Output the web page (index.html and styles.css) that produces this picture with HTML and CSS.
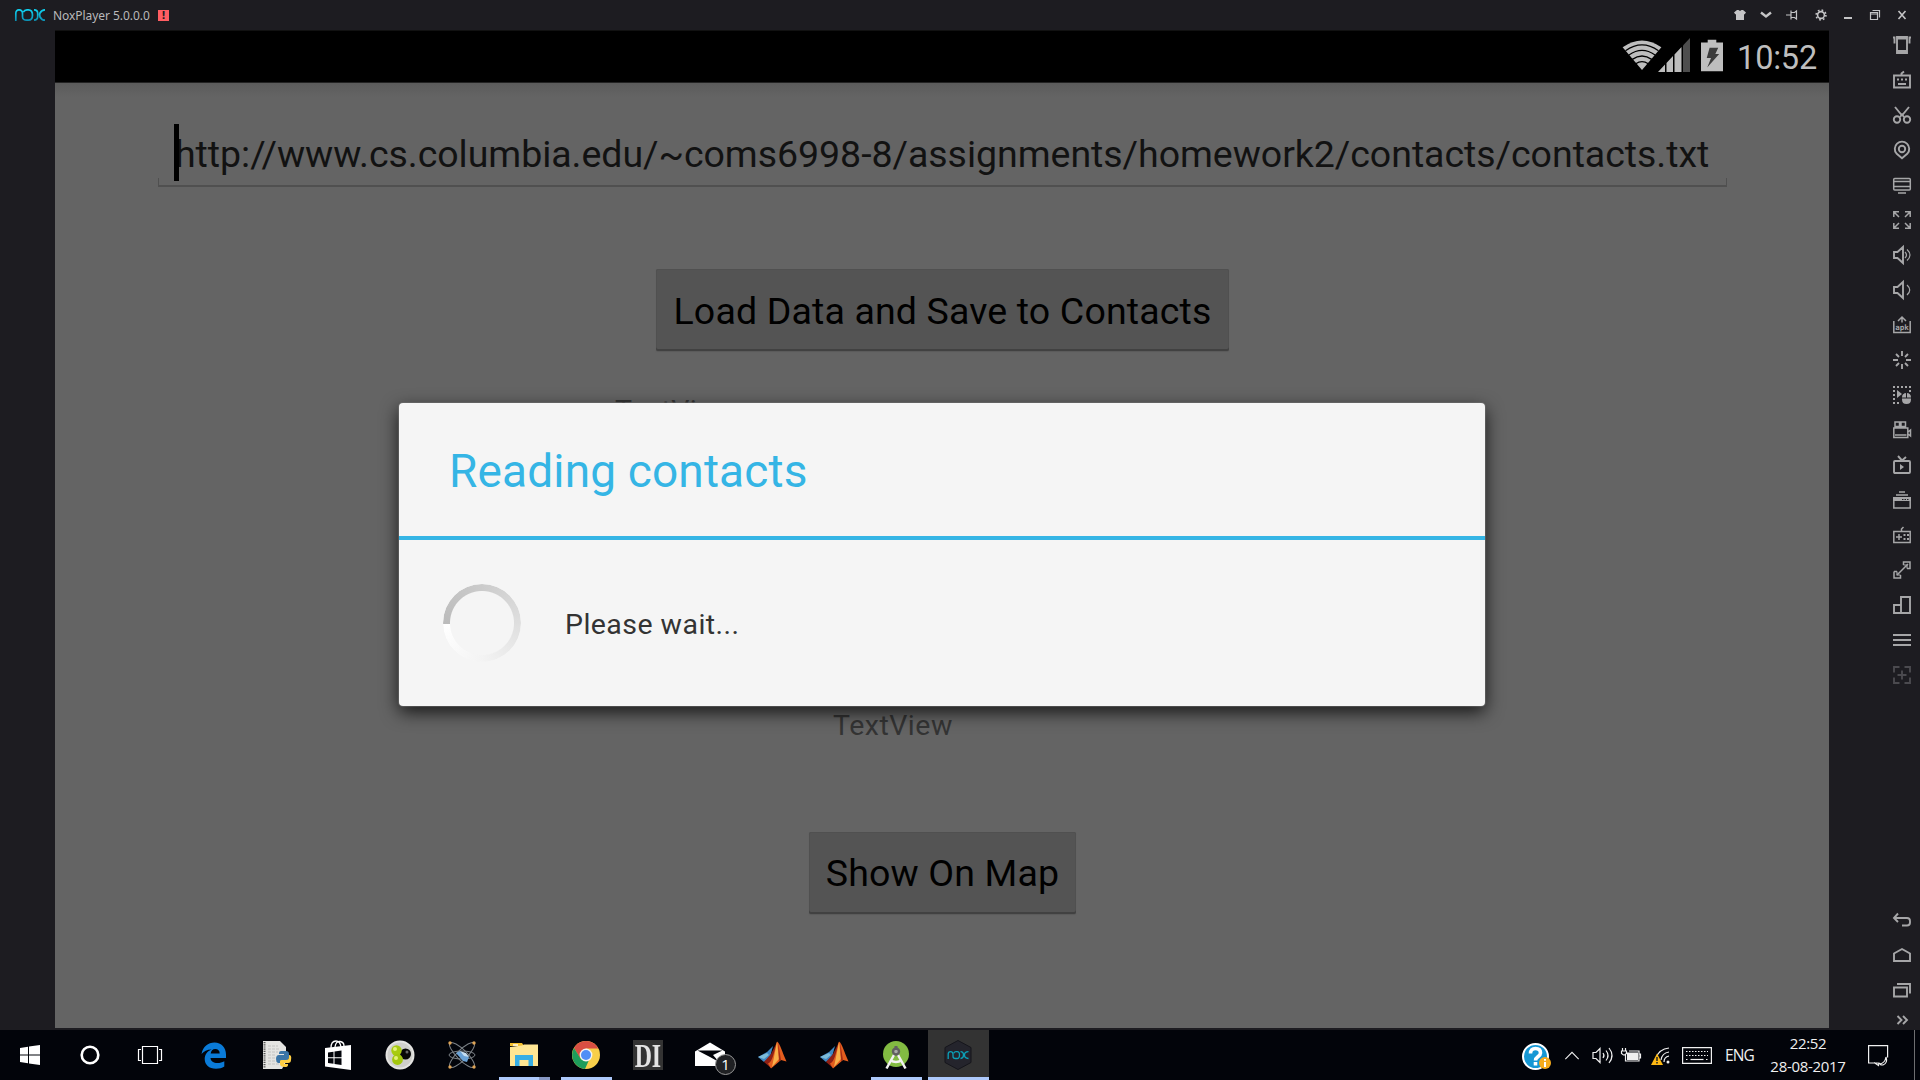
FILE: index.html
```html
<!DOCTYPE html>
<html lang="en">
<head>
<meta charset="utf-8">
<title>NoxPlayer 5.0.0.0</title>
<link rel="stylesheet" href="styles.css">
</head>
<body>
<div class="desktop">
  <header class="titlebar">
    <svg class="logo" viewBox="0 0 30 12" fill="none" stroke-width="1.7">
      <defs><linearGradient id="cyan" x1="0" y1="0" x2="0" y2="12" gradientUnits="userSpaceOnUse"><stop offset="0" stop-color="#0fd6f5"/><stop offset="1" stop-color="#0c8db0"/></linearGradient></defs>
      <path stroke="url(#cyan)" d="M.8 12V4.500C.8 2 2 .8 4 .8s3.500 1.200 3.500 3.700v3.200c0 2.400 1.800 3.500 4.200 3.500h1.800c2.600 0 4-1.800 4-5.200S16 .8 13.500.8h-1.500C10 .8 9 1.800 8.300 3.200M19 .8c2.500 0 3.700 1.200 3.700 3.600V7.600c0 2.400-1.200 3.600-3.700 3.600M30 .8c-2.600 0-4 1.200-5 3.200s0 2.500 0 4c1 2 2.400 3.200 5 3.200"/>
    </svg>
    <span class="app-title">NoxPlayer 5.0.0.0</span>
    <span class="alert">!</span>
    <div class="window-tools">
      <svg viewBox="0 0 12 12" fill="#c4c4c6"><path d="M3 1h1.500l1.500 1 1.500-1H9l3 2.500-1.500 2L10 5v6H2V5l-.5.5L0 3.500z"/></svg>
      <svg viewBox="0 0 12 12" fill="none" stroke="#c4c4c6" stroke-width="2.400"><path d="M1 3.500l5 4 5-4"/></svg>
      <svg viewBox="0 0 12 12" fill="none" stroke="#c4c4c6" stroke-width="1.200"><path d="M0 6h4.500M5 1.500v9M5 3.500h3.500l2-1.500v8l-2-1.500H5"/></svg>
      <svg viewBox="0 0 12 12" fill="none" stroke="#c4c4c6"><circle cx="6" cy="6" r="3.400" stroke-width="1.600"/><circle cx="6" cy="6" r="4.900" stroke-width="1.600" stroke-dasharray="1.700 2.148"/></svg>
      <svg viewBox="0 0 12 12" fill="#c4c4c6"><path d="M2 8h8v2H2z"/></svg>
      <svg viewBox="0 0 12 12" fill="none" stroke="#c4c4c6" stroke-width="1.200"><path d="M1.500 3.500h7v7h-7zM1.500 5h7M3.500 1.500h7v7"/></svg>
      <svg viewBox="0 0 12 12" fill="none" stroke="#c4c4c6" stroke-width="1.600"><path d="M2.500 2l7 8M9.500 2l-7 8"/></svg>
    </div>
  </header>

  <div class="player">
    <main class="screen">
      <div class="statusbar">
        <svg class="wifi" viewBox="0 0 40 32"><path fill="#bebebe" d="M0 7.500Q20-6.500 40 7.500L20 31z"/><path fill="none" stroke="#000" stroke-width="1.300" d="M3 11Q20-1 37 11M6.500 15.500Q20 6 33.500 15.500M10 20q10-7 20 0M13.500 24.500q6.500-4.500 13 0"/></svg>
        <svg class="signal" viewBox="0 0 32 34"><path fill="#bebebe" d="M0 34l7-7.400V34zM8.500 25l6.500-7v16H8.500zM16.500 16.500l7-7.500v25h-7z"/><path fill="#4d4d4d" d="M25 7.500L32 0v34h-7z"/></svg>
        <svg class="battery" viewBox="0 0 23 33"><path fill="#bebebe" d="M7 0h9v3h7v30H0V3h7z"/><path fill="#3c3c3c" d="M9 8.500h9L15 15h4L6.500 29l4-10H6z"/></svg>
        <span class="clock">10:52</span>
      </div>
      <div class="app">
        <div class="url-field"><span class="caret"></span><span class="url">http://www.cs.columbia.edu/~coms6998-8/assignments/homework2/contacts/contacts.txt</span></div>
        <div class="button load">Load Data and Save to Contacts</div>
        <div class="label first">TextView</div>
        <div class="label second">TextView</div>
        <div class="button map">Show On Map</div>
      </div>
      <section class="dialog">
        <h1>Reading contacts</h1>
        <div class="dialog-body"><span class="spinner"></span><p>Please wait...</p></div>
      </section>
    </main>

    <aside class="sidebar">
      <svg viewBox="0 0 18 18"><path d="M4 1h10v16H4zM4 2.500h10M4 15h10M0 1.500h1.500v6M18 1.500h-1.500v6"/><path class="fill" d="M7 14.500h4V17H7z"/></svg>
      <svg viewBox="0 0 18 18"><path d="M1 4.500h16v12H1zM8.500 4V2.500L11 .5M5 13h8"/><path class="fill" d="M4 7.500h2v2H4zM8 7.500h2v2H8zM12 7.500h2v2h-2z"/></svg>
      <svg viewBox="0 0 18 18"><path d="M2 1l7 8.500M16 1L9 9.500M7 11l2-2.500 2 2.500"/><circle cx="4" cy="13.500" r="3.200"/><circle cx="14" cy="13.500" r="3.200"/></svg>
      <svg viewBox="0 0 18 18"><path d="M9 17.200L3.500 12.500a7.200 7.200 0 1 1 11 0z"/><circle cx="9" cy="8" r="3.200"/></svg>
      <svg viewBox="0 0 18 18"><path class="slim" d="M1.700 2.500h14.600q1 0 1 1v9.500q0 1-1 1H1.700q-1 0-1-1V3.500q0-1 1-1zM1 5.500h16M1 10.500h16M5 17h8"/></svg>
      <svg viewBox="0 0 18 18"><path class="slim" d="M.8 6V.8H6M1 1l5 5M12 .8h5.200V6M17 1l-5 5M.8 12v5.200H6M1 17l5-5M12 17.200h5.200V12M17 17l-5-5"/></svg>
      <svg viewBox="0 0 18 18"><path d="M1 6h3.500L10 1v16L4.500 12H1z"/><path class="thin" d="M12 6q3 3 0 6M14 3.500q6 5.500 0 11"/></svg>
      <svg viewBox="0 0 18 18"><path d="M1 6h3.500L10 1v16L4.500 12H1z"/><path class="thin" d="M14 4q5.500 5 0 10"/></svg>
      <svg viewBox="0 0 18 18"><path class="slim" d="M.8 5v11.500h16.400V5M9 6.500V1M5 5l4-4 4 4"/><text x="9" y="14">apk</text></svg>
      <svg viewBox="0 0 18 18"><path d="M9 0v5M9 13v5M0 9h5M13 9h5M3 3l3 3M12 12l3 3M15 3l-3 3M6 12l-3 3"/></svg>
      <svg viewBox="0 0 18 18"><path class="dots" d="M0 1h18M1 4v14M0 17h7M17 4v3"/><path class="fill" d="M4 4l5 4-5 4zM9 11.500q0-4.500 4.500-4.500t4.500 4.500v2q0 4.500-4.500 4.500T9 13.500z"/><path class="cut" d="M9 12h9M13.500 7v5"/></svg>
      <svg viewBox="0 0 18 18"><path class="slim" d="M.8 7h14v9.500H.8zM15 11l2.500-2v6L15 13M2 14h11.500M2 1h4.500v4.500H2zM8 1h4.500v4.500H8z"/></svg>
      <svg viewBox="0 0 18 18"><path d="M2 5h14q1 0 1 1v10q0 1-1 1H2q-1 0-1-1V6q0-1 1-1zM5 0l4 4.500M13 1L9 4.500"/><path class="fill" d="M7 8l4 3-4 3z"/></svg>
      <svg viewBox="0 0 18 18"><path class="slim" d="M.8 7h16.400v10H.8zM6 1h6M3 4h12"/><path class="fill" d="M0 6h18v4H0z"/><path class="cut" d="M9 8.500h7.500" stroke-dasharray="1.500 1"/></svg>
      <svg viewBox="0 0 18 18"><path class="slim" d="M.8 5.500h16.400v11H.8zM8.500 5V3L10.500 1M3 11h6M6 8v6"/><path class="fill" d="M10.500 8h2v2h-2zM14 8h2v2h-2zM10.500 12h2v2h-2zM14 12h2v2h-2z"/></svg>
      <svg viewBox="0 0 18 18"><path class="slim" d="M10.500 4V1H17v6.500h-3M1 10.500h3M7.500 14v3H1v-6.500M4 14L15 3"/><path class="thin" d="M4 10.500v3.500h3.500M10.500 4H14v3.500"/></svg>
      <svg viewBox="0 0 18 18"><path d="M1 9h7v8H1zM8 1h9v16H8z"/></svg>
      <svg viewBox="0 0 18 18"><path d="M0 4h18M0 9h18M0 14h18"/></svg>
      <svg class="dim" viewBox="0 0 18 18"><path d="M6.500 1H1v5.500M11.500 1H17v5.500M6.500 17H1v-5.500M11.500 17H17v-5.500M9 4.500v9M4.500 9h9"/></svg>
      <div class="nav-keys">
        <svg viewBox="0 0 18 18"><path d="M1 7h13q3 0 3 3v1.500q0 3-3 3H9M5 2.500L1 7l4 4"/></svg>
        <svg viewBox="0 0 18 18"><path d="M1 15V7.500L9 3l8 4.500V15z"/></svg>
        <svg viewBox="0 0 18 18"><path d="M1 6.500h13v9H1zM4 3h13v9.500"/></svg>
        <svg class="more" viewBox="0 0 18 18"><path d="M4.500 5l4 4-4 4M10 5l4 4-4 4"/></svg>
      </div>
    </aside>
  </div>

  <footer class="taskbar">
    <div class="system">
      <svg viewBox="0 0 30 30" fill="#fff"><path d="M5 8l8-1.200v7.700H5zM14 6.600L25 5v9.500H14zM5 15.500h8v7.700L5 22zM14 15.500h11V25l-11-1.600z"/></svg>
      <svg viewBox="0 0 30 30"><circle cx="15" cy="15" r="8.300" fill="none" stroke="#fff" stroke-width="2.600"/></svg>
      <svg viewBox="0 0 30 30" fill="none" stroke="#fff" stroke-width="1.200"><path d="M7.500 6.500h15v17h-15zM6 9.500H3.500v11H6M24 9.500h2.500v11H24"/></svg>
    </div>
    <div class="apps">
      <div class="task"><svg viewBox="0 0 30 30"><path fill="#0a7bd8" d="M2.500 14C4 6.500 9 2.500 15.500 2.500 22.500 2.500 27 7.500 27 14.500V18H11.500c.3 3.500 3 5 7 5 2.500 0 4.700-.6 6.800-1.800v5.300C23 28 20.500 28.700 17 28.700c-7 0-11.300-4-11.300-9.700 0-4.500 2.500-8 7-9.600C8 9.500 4.800 11 2.500 14zm9.200-.5h9C20.700 10.500 19 9 16.300 9s-4.300 1.800-4.600 4.500z"/></svg></div>
      <div class="task"><svg viewBox="0 0 30 30"><path fill="#e4e4e2" d="M2 1h17l6 6v15L21 29H2z"/><path stroke="#c2c2c1" stroke-dasharray="3 1" d="M7 6h10M7 9h12M7 12h10M7 15h8M7 18h8M7 21h9M7 24h11"/><path stroke="#555" stroke-width="2" stroke-dasharray="1.200 1" d="M3.500 2v26"/><path fill="#3a75a8" d="M20 11h5q3 0 3 3v4q0 2-2 2h-5l-2 3h-2q-2-1-2-4 0-4 3-4h5v-1h-5v-1q0-2 2-2z"/><path fill="#ffce42" d="M28 15q3 0 2 5 0 3-3 3h-4v1h4v1q0 2-3 2-5 0-5-3v-3q0-1 2-1h4q3 0 3-3z"/></svg></div>
      <div class="task"><svg viewBox="0 0 30 30"><path fill="none" stroke="#fff" stroke-width="1.300" d="M8 8q0-7 5-7 4 0 5 6M12 7q1-6 5-5.500Q21 2 21 6"/><path fill="#fff" d="M2 8l26-3v25L2 26.500z"/><path fill="#02040a" d="M5 12.500l5.500-.8v5.600H5zM11.500 11.500l7-1v6.800h-7zM5 18.300h5.500v5.500L5 23zM11.500 18.300h7V25l-7-1z"/></svg></div>
      <div class="task"><svg viewBox="0 0 30 30"><circle cx="15" cy="15" r="14.500" fill="#e4e4e2"/><circle cx="15" cy="15" r="12.500" fill="#cfcfcc"/><circle cx="20.500" cy="14" r="5.500" fill="#080808"/><circle cx="11.500" cy="10.500" r="5.200" fill="#a8cb10"/><circle cx="12.500" cy="19.500" r="5.400" fill="#a3c60d"/><circle cx="10" cy="9" r="2" fill="#e2f276"/><circle cx="11" cy="18" r="2" fill="#e2f276"/><circle cx="22" cy="12" r="1.500" fill="#666"/></svg></div>
      <div class="task"><svg viewBox="0 0 30 30" fill="none" stroke="#7d8388"><ellipse cx="15" cy="15" rx="17" ry="5" transform="rotate(45 15 15)"/><ellipse cx="15" cy="15" rx="17" ry="5" transform="rotate(-45 15 15)"/><ellipse cx="15" cy="15" rx="13" ry="4"/><path stroke="none" fill="#6aa2d6" d="M9 13l4-2 9 6-2 5-4-1z"/><path stroke="none" fill="#c5def2" d="M13 11l6 2 3 4-5-1z"/><g stroke="none" fill="#dfa455"><circle cx="3" cy="3" r="1.700"/><circle cx="27" cy="3" r="1.700"/><circle cx="3" cy="27" r="1.700"/><circle cx="27" cy="27" r="1.700"/></g></svg></div>
      <div class="task multi"><svg viewBox="0 0 30 30"><path fill="#f5c02d" d="M1 3h12l2 3H1z"/><path fill="#fff" d="M4 4.300h5v1.400H4z"/><path fill="#ffe693" d="M1 7l12-1.500L15 4.500h14V26H1z"/><path fill="#37aee5" d="M6 15h18v11h-4.500v-6h-9v6H6z"/></svg></div>
      <div class="task running"><svg viewBox="0 0 30 30"><circle cx="15" cy="15" r="14" fill="#f8cf4a"/><path fill="#d84f43" d="M15 1a14 14 0 0 1 12.400 7.500H15L9 18 3 8A14 14 0 0 1 15 1z"/><path fill="#1d9d5b" d="M3 8l6.500 10.500L18 20l-4 9A14 14 0 0 1 3 8z"/><circle cx="15" cy="15" r="6.400" fill="#f4f4f4"/><circle cx="15" cy="15" r="5" fill="#4f8ef6"/></svg></div>
      <div class="task"><div class="di"><span>DI</span></div></div>
      <div class="task"><svg viewBox="0 0 30 30"><path fill="#fff" d="M0 11.500L15 2.500l15 9V26H0z"/><path fill="#02040a" d="M2.500 10.500H27.500L18 15l6 7-9-5z"/></svg><span class="badge">1</span></div>
      <div class="task"><svg viewBox="0 0 30 30"><path fill="#3f87c4" d="M1 17l9-5 6-6-3 11-6 5z"/><path fill="#7dbbd8" d="M1 17l9-4 2 2-5 4z"/><path fill="#8e2015" d="M7 22l7-8 6-12 1 16-7 10z"/><path fill="#e35d1e" d="M20 1.500c3 2 5 10 9.500 20L24 20 14 28.500l-3-5c5-2 6-12 9-22z"/><path fill="#f9b04a" d="M20 2l2 17-7 8 2-10z"/><path fill="#a52a17" d="M21 2l3 18-2 1z"/></svg></div>
      <div class="task"><svg viewBox="0 0 30 30"><path fill="#3f87c4" d="M1 17l9-5 6-6-3 11-6 5z"/><path fill="#7dbbd8" d="M1 17l9-4 2 2-5 4z"/><path fill="#8e2015" d="M7 22l7-8 6-12 1 16-7 10z"/><path fill="#e35d1e" d="M20 1.500c3 2 5 10 9.500 20L24 20 14 28.500l-3-5c5-2 6-12 9-22z"/><path fill="#f9b04a" d="M20 2l2 17-7 8 2-10z"/><path fill="#a52a17" d="M21 2l3 18-2 1z"/></svg></div>
      <div class="task running"><svg viewBox="0 0 30 30"><circle cx="15" cy="14" r="13" fill="#82bb42"/><path fill="none" stroke="#f2f2f2" stroke-width="2.500" d="M13.500 14L5.500 28.500M16.500 14l8 14.500M9 20q6 4 12 0"/><circle cx="15" cy="11.500" r="3" fill="#aaa" stroke="#606060" stroke-width="2.400"/><path stroke="#606060" stroke-width="3" d="M15 6v4"/></svg></div>
      <div class="task running active"><svg viewBox="0 0 30 30"><path fill="#24242c" stroke="#15151b" d="M15 .5l13 7v15l-13 7-13-7v-15z"/><path transform="translate(4.500 11)" fill="none" stroke="#0ba1b8" stroke-width="1.300" d="M.7 8V3Q.7.7 3 .7T5.500 3v2.500Q5.500 7.500 8 7.500h1.500Q12 7.500 12 4T9.500.7H8.500Q7 .7 6.200 2.300M13 .7q3 0 3 3.300t-3 3.500M21 .7q-4 0-4 3.300t4 3.500"/></svg></div>
    </div>
    <div class="tray">
      <svg class="help" viewBox="0 0 30 28"><circle cx="13.500" cy="13.500" r="12.500" fill="#1597d4" stroke="#fff" stroke-width="2"/><path fill="none" stroke="#fff" stroke-width="3.600" d="M8.500 10.500q0-5 5-5t5 4.500c0 3.500-5 3.500-5 7.500M13.500 19v3.500"/><circle cx="23" cy="20" r="6" fill="#f6ab1c" stroke="none"/><path stroke="#fff" stroke-width="2" d="M23 16v1.800M23 19v5"/></svg>
      <svg class="chev" viewBox="0 0 16 10"><path d="M.6 9L8 1.500 15.400 9"/></svg>
      <svg class="vol" viewBox="0 0 21 17"><path d="M1 5.500h3l4-4v14l-4-4H1zM11 6q2 2.500 0 5M14 3.500q4 5 0 10M17 1q6 7.500 0 15"/></svg>
      <svg class="batt" viewBox="0 0 20 14"><path d="M4.500 6v7h13.500V3H8M18 6h1.500v4H18M1.500 0v3M4.500 0v3M.5 3h5v2.500l-2 1.500h-1L.5 5.500z"/><path class="solid" d="M6 4.500h11v7.500H6z"/></svg>
      <svg class="net" viewBox="0 0 20 18"><path d="M5 11Q8 2 18 1M10 13q1-7 8-8M13 15q0-5 5-6"/><circle class="solid" cx="17" cy="15" r="1.500"/><path fill="#fdb813" stroke="none" d="M6 6.500L12 18H0z"/><path stroke="#222" stroke-width="1.500" d="M6 10v4M6 15v1.500"/></svg>
      <svg class="keys" viewBox="0 0 30 17"><path d="M.6.6h28.800v15.800H.6z"/><path stroke-dasharray="1.500 1.500" d="M4 4.500h22M4 8.500h22M4 12.500h3M24 12.500h3"/><path d="M8.500 12.500h13"/></svg>
      <span class="lang">ENG</span>
      <div class="datetime"><span>22:52</span><span>28-08-2017</span></div>
      <svg class="action" viewBox="0 0 21 21"><path d="M12.500 18.500L9 18H6.500L.6 18V.6h19v12M6 17.500l4.500 3 .5-3"/><path fill="#02040a" d="M18 12q2 6-3 8-3 0-3-1 5-1 6-7z"/></svg>
    </div>
  </footer>
</div>
</body>
</html>
```
FILE: styles.css
```css
* { box-sizing: border-box; }
body { margin: 0; background: #1d1c21; overflow: hidden; }
svg { display: block; flex: none; overflow: visible; }

.desktop { display: flex; flex-direction: column; width: 1920px; height: 1080px; }

/* Window title bar */
.titlebar { display: flex; align-items: center; height: 30px; padding: 0 12px 0 15px; }
.logo { width: 30px; height: 12px; }
.app-title { margin-left: 8px; padding-top: 1px; width: 98px; font: 12px/30px "Noto Sans", sans-serif; letter-spacing: -.05px; color: #b9b9bb; white-space: nowrap; }
.alert { margin-left: 7px; width: 11px; height: 11px; background: #ff5d62; color: #1d1c21; font: bold 10px/11px "DejaVu Sans", sans-serif; text-align: center; }
.window-tools { margin-left: auto; display: grid; grid-template-columns: repeat(2, 26px) 29px 27px 27px 27px 12px; }
.window-tools svg { width: 12px; height: 12px; }

/* Player body */
.player { display: flex; height: 1000px; }
.screen { position: relative; margin: 0 0 2px 55px; width: 1774px; border-top: 1px solid #111; border-bottom: 1px solid #4c4c4c; background: #646464; font-family: Roboto, sans-serif; }
.statusbar { display: flex; justify-content: flex-end; height: 52px; padding-right: 12px; background: #000; border-bottom: 1px solid #222; }
.wifi { width: 40px; height: 31px; margin-top: 9px; }
.signal { width: 32px; height: 34px; margin: 7px 0 0 -4px; }
.battery { width: 22px; height: 33px; margin: 8px 0 0 11px; }
.clock { margin: 1px 0 0 14px; font-size: 32.5px; line-height: 52px; letter-spacing: -.2px; color: #bebebe; }

.app { display: flex; flex-direction: column; height: 945px; padding-top: 41px; background: linear-gradient(#5b5b5b, #646464 14px); }
.url-field { position: relative; display: flex; margin-left: 103px; width: 1569px; height: 63px; padding: 1px 0 0 17px; border-bottom: 2px solid #505050; color: #121212; }
.url-field::before, .url-field::after { content: ""; position: absolute; bottom: 0; width: 1px; height: 7px; background: #505050; }
.url-field::before { left: 0; }
.url-field::after { right: 0; }
.caret { position: absolute; left: 16px; top: 0; width: 5px; height: 57px; background: #000; }
.url { font-size: 37.5px; line-height: 59px; letter-spacing: -.04px; white-space: nowrap; }
.button { align-self: center; height: 82px; padding: 2px 0 0 1px; border-radius: 2px; background: #545454; color: #000; font-size: 37.5px; line-height: 80px; letter-spacing: .15px; text-align: center; white-space: nowrap; box-shadow: inset 0 -2px #414141, inset 0 0 0 1px #505050, 0 1px 1px #5a5a5a; }
.load { width: 573px; margin-top: 82px; }
.map { width: 267px; margin-top: 89px; line-height: 79px; }
.label { height: 34px; font-size: 28.500px; line-height: 34px; letter-spacing: .5px; color: #343434; }
.first { margin: 43px 0 0 560px; }
.second { margin: 281px 0 0 778px; }

.dialog { position: absolute; left: 344px; top: 372px; width: 1086px; height: 303px; border-radius: 4px; background: #f5f5f5; box-shadow: 0 0 1px 1px rgba(120,120,120,.5), 0 6px 18px rgba(0,0,0,.8); }
.dialog h1 { margin: 0; height: 137px; padding: 4px 0 0 50px; border-bottom: 4px solid #35b5e5; font-size: 46px; line-height: 129px; letter-spacing: .15px; font-weight: 400; color: #35b5e5; }
.dialog-body { display: flex; align-items: center; height: 165px; padding-left: 44px; }
.spinner { width: 78px; height: 78px; border-radius: 50%; background: conic-gradient(from 268deg, #bbb, #cbcbcb 25%, #dedede 50%, #ebebeb 65%, #f3f3f3 75%, #fff); -webkit-mask: radial-gradient(circle, transparent 31.500px, #000 32.500px); mask: radial-gradient(circle, transparent 31.500px, #000 32.500px); }
.dialog-body p { margin: 0 0 0 44px; padding-top: 3px; font-size: 28.500px; letter-spacing: .45px; color: #333; }

/* Tool column */
.sidebar { display: flex; flex-direction: column; margin-left: 64px; width: 18px; padding-top: 6px; }
.sidebar svg { width: 18px; height: 18px; margin-bottom: 17px; fill: none; stroke: #a6a6a8; stroke-width: 1.900; }
.sidebar .fill { fill: #a6a6a8; stroke: none; }
.sidebar .slim { stroke-width: 1.500; }
.sidebar .thin { stroke-width: 1.200; }
.sidebar .cut { stroke: #1d1c21; stroke-width: 1; }
.sidebar .dots { stroke-width: 2; stroke-dasharray: 2 2; }
.sidebar text { font: bold 7.500px "DejaVu Sans Mono", monospace; fill: #a6a6a8; stroke: none; text-anchor: middle; }
.sidebar .dim { stroke: #4b4a4f; }
.nav-keys { margin-top: 210px; }
.nav-keys .more { margin-top: -5px; }

/* Windows taskbar */
.taskbar { display: flex; height: 50px; background: #02040a; }
.system { display: flex; width: 183px; }
.system svg { width: 30px; height: 30px; margin: 10px 15px 0; }
.apps { display: flex; }
.task { position: relative; width: 62px; height: 50px; padding: 10px 16px 0; }
.task > svg { width: 30px; height: 30px; }
.running::after, .multi::after { content: ""; position: absolute; left: 6px; bottom: 0; width: 51px; height: 3px; background: #adc9fb; }
.multi::after { left: 6px; background: linear-gradient(90deg, #adc9fb 40px, #8798c4 40px); }
.active { background: linear-gradient(#333, #333) 1px 0 / 61px 50px no-repeat; }
.active::after { left: 1px; width: 61px; }
.di { display: flex; justify-content: center; width: 30px; height: 30px; background: #333; color: #e4e4e4; font: bold 34px/31px "Liberation Serif", serif; }
.di span { transform: scaleX(.7); }
.badge { position: absolute; left: 36px; top: 24px; width: 21px; height: 21px; border: 1px solid #999; border-radius: 50%; background: #202124; color: #fff; font: 15px/19px "Open Sans", sans-serif; text-align: center; }
.tray { display: flex; align-items: center; margin-left: auto; margin-right: 5px; padding-right: 25px; border-right: 1px solid #6d6e70; color: #f0f0f0; }
.tray svg { fill: none; stroke: #f0f0f0; stroke-width: 1.200; }
.tray .solid { fill: #f0f0f0; stroke: none; }
.help { width: 30px; height: 28px; margin-top: 3px; }
.chev { width: 16px; height: 9px; margin-left: 12px; }
.vol { width: 21px; height: 17px; margin-left: 12px; }
.batt { width: 20px; height: 14px; margin-left: 8px; }
.net { width: 20px; height: 18px; margin: 2px 0 0 10px; }
.keys { width: 30px; height: 17px; margin: 1px 0 0 11px; }
.lang { margin: 0 0 0 13px; width: 30px; font: 15.500px/20px "Open Sans", sans-serif; letter-spacing: -.9px; }
.datetime { display: flex; flex-direction: column; align-items: center; margin-left: 14px; width: 78px; font: 15px/23px "Open Sans", sans-serif; letter-spacing: -.3px; }
.action { width: 21px; height: 21px; margin-left: 21px; }
```
